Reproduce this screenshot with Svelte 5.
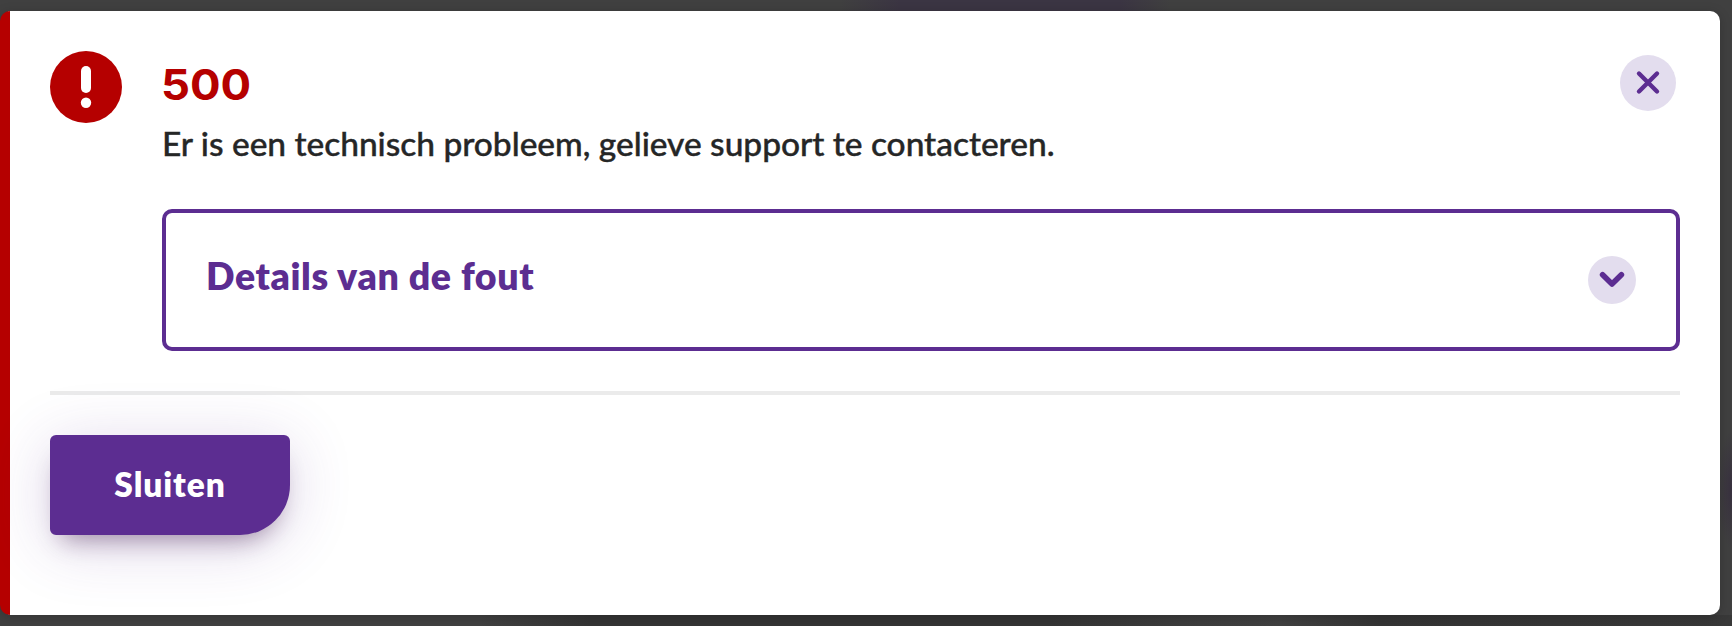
<script>
    let { code = "500", message = "Er is een technisch probleem, gelieve support te contacteren." } = $props();

    let open = $state(true);
    let expanded = $state(false);

    function close() {
        open = false;
    }
</script>

<div class="overlay">
    {#if open}
        <div class="alert" role="alertdialog" aria-labelledby="alert-title">
            <div class="body">
                <svg class="status" viewBox="0 0 72 72" aria-hidden="true">
                    <circle cx="36" cy="36" r="36" fill="#b50000" />
                    <path d="M36 20v17" stroke="#fff" stroke-width="10" stroke-linecap="round" />
                    <circle cx="36" cy="51.8" r="5.2" fill="#fff" />
                </svg>

                <div class="content">
                    <div class="header">
                        <div>
                            <h1 id="alert-title"><span>{code}</span></h1>
                            <p>{message}</p>
                        </div>
                        <button class="round close" aria-label="Sluiten" onclick={close}>
                            <svg viewBox="0 0 56 56">
                                <path d="M19 18.5l18 18M37 18.5l-18 18" />
                            </svg>
                        </button>
                    </div>

                    <div class="details">
                        <h2>Details van de fout</h2>
                        <button
                            class="round toggle"
                            class:expanded
                            aria-label="Details"
                            aria-expanded={expanded}
                            onclick={() => (expanded = !expanded)}
                        >
                            <svg viewBox="0 0 48 48">
                                <path d="M14.6 18.8l9.4 9.2 9.4-9.2" />
                            </svg>
                        </button>
                    </div>
                </div>
            </div>

            <div class="footer">
                <button class="primary" onclick={close}>Sluiten</button>
            </div>
        </div>
    {/if}
</div>

<style>
    :global(body) {
        overflow: hidden;
    }

    .overlay {
        box-sizing: border-box;
        width: 100vw;
        height: 626px;
        padding: 11px 12px 11px 0;
        /* Dimmed page with darker elements behind the dialog */
        background:
            radial-gradient(ellipse 14px 60px at 1732px 490px, #38303f, transparent),
            linear-gradient(to right, transparent 840px, #3b3543 900px, #3b3543 1120px, transparent 1170px) top / 100% 11px no-repeat,
            linear-gradient(to right, transparent 480px, #343434 590px, #343434 1050px, #3d3d3d 1200px, transparent 1280px, #343434 1380px, #383838) bottom / 100% 11px no-repeat,
            #404040;
        font-family: Lato, "Noto Sans", sans-serif;
    }

    .alert {
        box-sizing: border-box;
        height: 604px;
        padding: 40px 40px 0;
        border-left: 10px solid #b50000;
        border-radius: 10px;
        background: #fff;
        box-shadow: 0 2px 12px rgba(0, 0, 0, 0.2);
    }

    .body {
        display: flex;
        gap: 40px;
        align-items: flex-start;
        padding-bottom: 40px;
        border-bottom: 4px solid #ebebeb;
    }

    .status {
        flex: none;
        width: 72px;
        height: 72px;
    }

    .content {
        flex: 1;
    }

    .header {
        display: flex;
        justify-content: space-between;
        height: 158px;
    }

    h1,
    h2,
    p {
        margin: 0;
        white-space: nowrap;
    }

    h1 {
        height: 64px;
        color: #b50000;
        font: 650 42px/68px Inter, sans-serif;
    }

    h1 span {
        display: inline-block;
        margin-left: -1px;
        transform: scaleX(1.08);
        transform-origin: left;
    }

    p {
        color: #252626;
        font-size: 33.5px;
        font-weight: 500;
        line-height: 56px;
        letter-spacing: -0.03px;
        -webkit-text-stroke: 0.4px #252626;
    }

    .round {
        flex: none;
        padding: 0;
        border: 0;
        border-radius: 50%;
        background: #e3ddee;
        cursor: pointer;
    }

    .round svg {
        display: block;
        width: 100%;
        height: 100%;
        fill: none;
        stroke: #5c2d91;
        stroke-linecap: round;
    }

    .close {
        width: 56px;
        height: 56px;
        margin: 4px 4px 0 0;
    }

    .close svg {
        stroke-width: 4.4;
    }

    .toggle {
        width: 48px;
        height: 48px;
    }

    .toggle svg {
        stroke-width: 5.6;
        stroke-linejoin: round;
    }

    .toggle.expanded svg {
        transform: rotate(180deg);
    }

    .details {
        box-sizing: border-box;
        display: flex;
        align-items: center;
        justify-content: space-between;
        height: 142px;
        padding: 0 40px;
        border: 4px solid #5c2d91;
        border-radius: 10px;
    }

    h2 {
        margin-bottom: 8px;
        color: #5c2d91;
        font-size: 37.5px;
        font-weight: 800;
        line-height: 48px;
        letter-spacing: 0.6px;
    }

    .footer {
        padding-top: 40px;
    }

    .primary {
        display: block;
        width: 240px;
        height: 100px;
        padding: 0 0 3px;
        border: 0;
        border-radius: 6px 6px 50px 6px;
        background: #5c2d91;
        box-shadow:
            0 16px 24px -12px rgba(50, 10, 60, 0.42),
            0 10px 64px rgba(92, 45, 145, 0.2);
        color: #fff;
        font: 800 33.5px Lato, "Noto Sans", sans-serif;
        letter-spacing: 0.9px;
        cursor: pointer;
    }
</style>
